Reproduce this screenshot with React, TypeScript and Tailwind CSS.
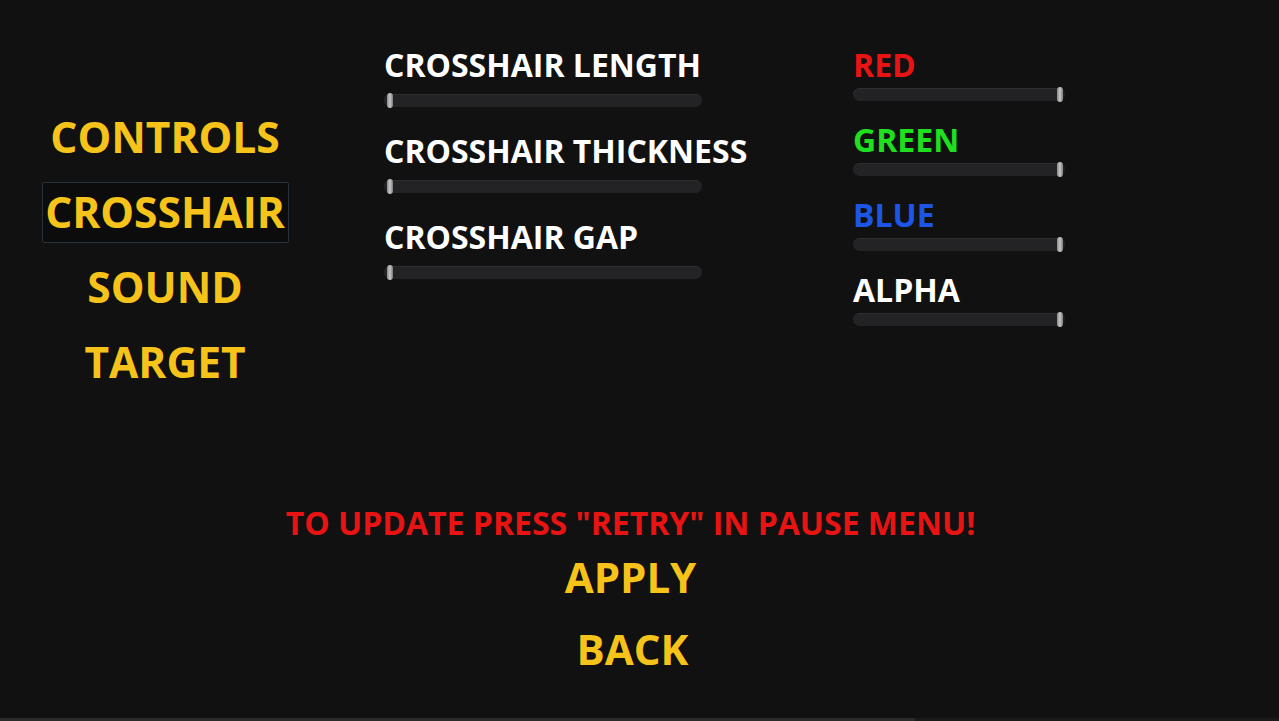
const menu = ["CONTROLS", "CROSSHAIR", "SOUND", "TARGET"];

const crosshairSliders = ["CROSSHAIR LENGTH", "CROSSHAIR THICKNESS", "CROSSHAIR GAP"];

const colorSliders = [
  { label: "RED", color: "text-[#e81313]" },
  { label: "GREEN", color: "text-[#1fe01f]" },
  { label: "BLUE", color: "text-[#1d55e6]" },
  { label: "ALPHA", color: "text-white" },
];

function Slider({ width, end }: { width: string; end: boolean }) {
  return (
    <div className={`relative flex h-[13px] items-center rounded-full bg-[#232326] shadow-[inset_0_1px_0_#2e2e32] ${width}`}>
      <div
        className={`absolute h-[15px] w-[6px] rounded-full bg-gradient-to-r from-[#8a8a8a] via-[#c8c8c8] to-[#7a7a7a] ${
          end ? "right-[2px]" : "left-[3px]"
        }`}
      />
    </div>
  );
}

export default function App() {
  return (
    <div className="relative flex h-[721px] w-full flex-col overflow-hidden bg-[#111111] font-['Open_Sans',sans-serif] font-bold">
      {/* Top area */}
      <div className="flex h-[500px]">
        {/* Menu */}
        <div className="flex w-[330px] flex-col items-center pt-[100px]">
          {menu.map((item) => (
            <div key={item} className="flex h-[75px] items-center justify-center">
              <div
                className={`flex h-[61px] w-[247px] items-center justify-center rounded-[2px] text-[42.5px] leading-none text-[#f6c31b] ${
                  item === "CROSSHAIR" ? "border border-[#28323c] bg-[#0c0c0d]" : ""
                }`}
              >
                {item}
              </div>
            </div>
          ))}
        </div>

        {/* Crosshair sliders */}
        <div className="ml-[54px] flex w-[469px] flex-col pt-[49px]">
          {crosshairSliders.map((label) => (
            <div key={label} className="mb-[28px] flex flex-col">
              <div className="h-[32px] text-[32px] leading-none text-white">{label}</div>
              <div className="mt-[13px]">
                <Slider width="w-[318px]" end={false} />
              </div>
            </div>
          ))}
        </div>

        {/* Colour sliders */}
        <div className="flex flex-col pt-[49px]">
          {colorSliders.map((s) => (
            <div key={s.label} className="mb-[23px] flex flex-col">
              <div className={`h-[32px] text-[32px] leading-none ${s.color}`}>{s.label}</div>
              <div className="mt-[7px]">
                <Slider width="w-[212px]" end={true} />
              </div>
            </div>
          ))}
        </div>
      </div>

      {/* Bottom area */}
      <div className="flex flex-col items-center pr-[18px] pt-[7px]">
        <div className="text-[32px] leading-none text-[#e81313]">TO UPDATE PRESS "RETRY" IN PAUSE MENU!</div>
        <div className="mt-[17px] text-[42px] leading-none text-[#f6c31b]">APPLY</div>
        <div className="mt-[30px] pl-[4px] text-[42px] leading-none text-[#f6c31b]">BACK</div>
      </div>

      {/* Bottom strip */}
      <div className="absolute bottom-0 left-0 flex h-[3px] w-full">
        <div className="h-full w-[915px] bg-[#2a2a2a]" />
        <div className="h-full flex-1 bg-[#1a1a1a]" />
      </div>
    </div>
  );
}
